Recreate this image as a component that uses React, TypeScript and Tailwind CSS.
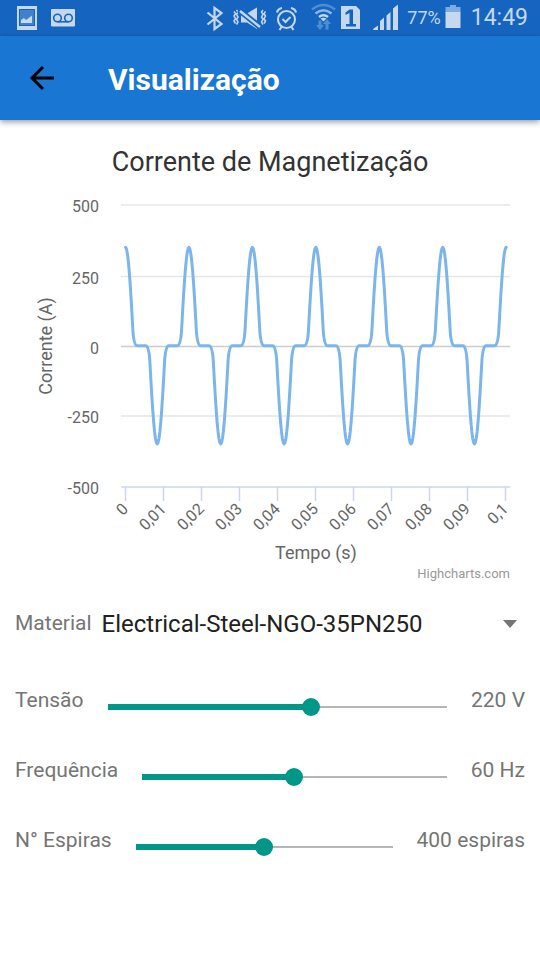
import { useState } from "react";

const ink = "#c5d8ee";

function StatusBar() {
  return (
    <div className="flex h-9 items-center justify-between bg-[#1565c0] text-[#c5d8ee]">
      <svg className="h-9 w-20" viewBox="0 0 80 36" fill="none">
        <path fill={ink} d="M17 6h20v24H17z" />
        <path fill="#1565c0" d="M19 9h16v17H19z" />
        <path fill={ink} opacity="0.25" d="M20 10h14v15H20z" />
        <path fill={ink} d="M21 23v-3l3-2 2 2 6-4.500V23z" />
        <rect x="51" y="9" width="24" height="17.500" rx="1" fill={ink} />
        <g stroke="#1565c0" strokeWidth="1.600">
          <circle cx="57.500" cy="18" r="3.800" />
          <circle cx="68.500" cy="18" r="3.800" />
          <path d="M57.500 21.800h11" />
        </g>
      </svg>
      <div className="flex h-9 items-center">
        <svg className="h-9 w-[200px]" viewBox="203 0 200 36" fill="none" stroke={ink}>
          <path strokeWidth="2.200" d="M207.500 12.500l14 11.500-7 5V8l7 5-14 11.500" />
          <g strokeWidth="1.500">
            <path d="M234 11.500l1.500 2-1.500 2.500 1.500 2.500-1.500 2.500 1.500 2.500M236.500 10l1.500 2-1.500 2.500 1.500 2.500-1.500 2.500 1.500 2.500-1.500 2.500" />
            <path d="M265.500 11.500l-1.500 2 1.500 2.500-1.500 2.500 1.500 2.500-1.500 2.500M263 10l-1.500 2 1.500 2.500-1.500 2.500 1.500 2.500-1.500 2.500 1.500 2.500" />
          </g>
          <path stroke="none" fill={ink} d="M241 13.500h6l10-6v21.500l-10-6.500h-6z" />
          <path stroke="#1565c0" strokeWidth="6" d="M239 10l21 17" />
          <path strokeWidth="2.400" d="M240 11l20 16" />
          <circle cx="286.500" cy="19.500" r="8.500" strokeWidth="2" />
          <path strokeWidth="2" d="M282.500 19l3 3 5-5M281.500 27l-2 3M291.500 27l2 3" />
          <path strokeWidth="2.200" d="M277 12.500c.5-2 2.500-4 5-4.500M296 12.500c-.5-2-2.500-4-5-4.500" />
          <path stroke="#4f8ed1" strokeWidth="2.500" d="M312 9.500q11.500-9 23 0" />
          <path stroke="#8fb7e2" strokeWidth="2.500" d="M315.500 13.500q8-6.500 16 0" />
          <path strokeWidth="2.500" d="M319 17q4.500-3.500 9 0" />
          <path stroke="none" fill={ink} d="M320.500 18.500q3-1.500 6 0l-3 3z" />
          <path stroke="none" fill="#4f8ed1" d="M318.500 20.500h3V25h2.500l-4 5-4-5h2.500zM325.500 29.500V24H323l4-5 4 5h-2.500v5.500z" />
          <path stroke="none" fill={ink} d="M341 6h15l4 4v19h-19z" />
          <path stroke="none" fill={ink} d="M373 29l5-3.500V30h-4.500zM380 21l4-3.500V30h-4zM386.500 15.500l4-3.500v18h-4zM393 8.500l5-4V30h-5z" />
          <path stroke="none" fill="#1565c0" d="M345.500 12.500l4-3h3.500V24h3v2.500h-10V24h3.500V13l-4 2z" />
        </svg>
        <span className="mr-1 ml-1 text-lg leading-9">77%</span>
        <svg className="h-9 w-4" viewBox="0 0 16 36">
          <path fill="#7facdf" d="M.500 7H5V5h6v2h4.500v6H.500z" />
          <path fill={ink} d="M.500 12h15v16H.500z" />
        </svg>
        <span className="mr-3 ml-2.5 text-[23px] leading-9">14:49</span>
      </div>
    </div>
  );
}

function AppBar() {
  return (
    <header className="relative flex h-21 items-center bg-[#1976d2] pl-7 shadow-[0_2px_6px_rgba(0,0,0,0.4)]">
      <button type="button" aria-label="Voltar" className="mr-13 h-7 w-7">
        <svg viewBox="0 0 28 28" className="h-7 w-7" fill="none" stroke="#000" strokeWidth="3">
          <path d="M26 14H5M15 3L4 14l11 11" />
        </svg>
      </button>
      <h1 className="pt-1 text-3xl font-bold text-white">Visualização</h1>
    </header>
  );
}

const plot = { left: 125.5, zero: 345.7, amplitude: 98.3, period: 63.45, cycles: 6 };
const gridLines = [
  { label: "500", y: 205 },
  { label: "250", y: 276.5 },
  { label: "0", y: 346.5 },
  { label: "-250", y: 416 },
  { label: "-500", y: 487 },
];
const ticks = ["0", "0,01", "0,02", "0,03", "0,04", "0,05", "0,06", "0,07", "0,08", "0,09", "0,1"];

// Magnetizing current: narrow peaks of alternating sign joined by a flat part.
function currentPath() {
  const parts: string[] = [];
  const halves = plot.cycles * 2;
  for (let h = 0; h <= halves; h++) {
    const cx = plot.left + (h * plot.period) / 2;
    const sign = h % 2 === 0 ? 1 : -1;
    const at = (d: number) =>
      `${(cx + d).toFixed(2)} ${(plot.zero - sign * plot.amplitude * Math.cos((Math.PI * d) / 16.4)).toFixed(2)}`;
    if (h > 0) {
      parts.push(`L${cx - 11.5} ${plot.zero}Q${cx - 8} ${plot.zero} ${at(-7.2)}`);
    }
    const from = h === 0 ? 0 : -7.2;
    const to = h === halves ? 0 : 7.2;
    for (let i = 0; i <= 16; i++) {
      parts.push(`${h === 0 && i === 0 ? "M" : "L"}${at(from + ((to - from) * i) / 16)}`);
    }
    if (h < halves) parts.push(`Q${cx + 8} ${plot.zero} ${cx + 11.5} ${plot.zero}`);
  }
  return parts.join("");
}

function Chart() {
  return (
    <svg viewBox="0 120 540 470" className="block w-full" role="img" aria-label="Corrente de Magnetização">
      <text x="270" y="171" textAnchor="middle" fontSize="27" fill="#333">
        Corrente de Magnetização
      </text>
      {gridLines.map((g) => (
        <g key={g.label}>
          <path
            d={`M121 ${g.y}H510`}
            strokeWidth="1.5"
            stroke={g.label === "-500" ? "#ccd6eb" : g.label === "0" ? "#ccc" : "#e6e6e6"}
          />
          <text x="99" y={g.y + 7} textAnchor="end" fontSize="16" fill="#666">
            {g.label}
          </text>
        </g>
      ))}
      {ticks.map((t, i) => (
        <g key={t}>
          <path d={`M${125.5 + i * 38} 487v14`} stroke="#ccd6eb" strokeWidth="1.500" />
          <text
            transform={`translate(${129 + i * 38} 510) rotate(-45)`}
            textAnchor="end"
            fontSize="16"
            fill="#666"
          >
            {t}
          </text>
        </g>
      ))}
      <path d={currentPath()} fill="none" stroke="#7cb5ec" strokeWidth="3" strokeLinecap="round" strokeLinejoin="round" />
      <text transform="translate(52 346) rotate(-90)" textAnchor="middle" fontSize="18" fill="#666">
        Corrente (A)
      </text>
      <text x="316" y="559" textAnchor="middle" fontSize="18" fill="#666">
        Tempo (s)
      </text>
      <text x="510" y="578" textAnchor="end" fontSize="13" fill="#999">
        Highcharts.com
      </text>
    </svg>
  );
}

type SliderProps = { id: string; label: string; unit: string; min: number; max: number; initial: number };

function SliderRow({ id, label, unit, min, max, initial }: SliderProps) {
  const [value, setValue] = useState(initial);
  const share = ((value - min) / (max - min)) * 100;
  return (
    <div className="flex h-[70px] items-start text-[21px] leading-7 text-[#757575]">
      <label htmlFor={id}>{label}</label>
      <input
        id={id}
        type="range"
        min={min}
        max={max}
        value={value}
        onChange={(e) => setValue(Number(e.target.value))}
        className="mx-6 mt-3 h-[18px] min-w-0 flex-1 appearance-none bg-no-repeat [&::-webkit-slider-thumb]:h-[18px] [&::-webkit-slider-thumb]:w-[18px] [&::-webkit-slider-thumb]:appearance-none [&::-webkit-slider-thumb]:rounded-full [&::-webkit-slider-thumb]:bg-[#009688]"
        style={{
          backgroundImage: "linear-gradient(#009688, #009688), linear-gradient(#b5b5b5, #b5b5b5)",
          backgroundPosition: "left center, left center",
          backgroundSize: `${share}% 6px, 100% 2px`,
        }}
      />
      <output htmlFor={id}>
        {value} {unit}
      </output>
    </div>
  );
}

export default function App() {
  return (
    <div className="min-h-screen bg-white font-[Roboto,sans-serif]">
      <StatusBar />
      <AppBar />
      <main>
        <Chart />
        <form className="px-[15px]">
          <div className="mt-4 mb-11 flex h-9 items-center">
            <label htmlFor="material" className="mr-2.5 text-[21px] text-[#757575]">
              Material
            </label>
            <div className="relative flex-1">
              <select id="material" className="w-full appearance-none bg-transparent text-2xl text-[#212121]">
                <option>Electrical-Steel-NGO-35PN250</option>
              </select>
              <svg className="pointer-events-none absolute top-3 right-2 h-2 w-3.5" viewBox="0 0 14 8">
                <path d="M0 0h14L7 8z" fill="#757575" />
              </svg>
            </div>
          </div>
          <SliderRow id="tensao" label="Tensão" unit="V" min={40} max={338} initial={220} />
          <SliderRow id="frequencia" label="Frequência" unit="Hz" min={0} max={120} initial={60} />
          <SliderRow id="espiras" label="N° Espiras" unit="espiras" min={0} max={800} initial={400} />
        </form>
      </main>
    </div>
  );
}
